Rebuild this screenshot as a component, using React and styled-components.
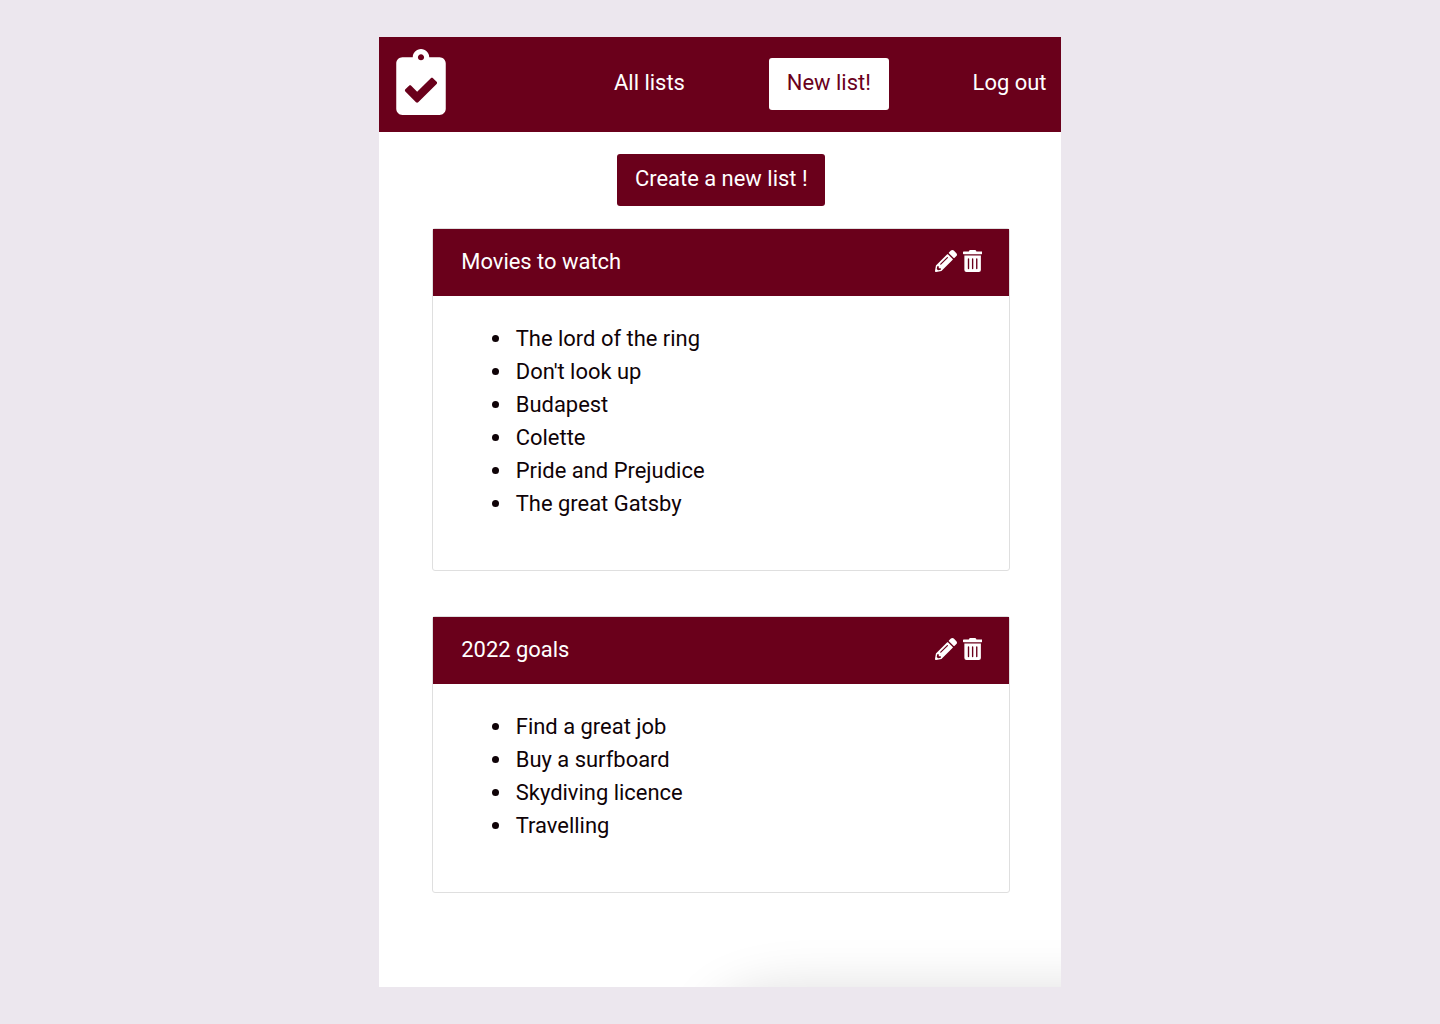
import React from "react";
import styled, { createGlobalStyle } from "styled-components";
import { FaClipboardCheck, FaPencilAlt, FaTrashAlt } from "react-icons/fa";

const wine = "#6a001b";

const GlobalStyle = createGlobalStyle`
  * { box-sizing: border-box; }
  body {
    margin: 0;
    background: #ece7ee;
    color: #0f0307;
    font: 21.95px/33px Roboto, "Liberation Sans", sans-serif;
  }
`;

const Backdrop = styled.div`
  display: flex;
  justify-content: center;
  height: 1024px;
  padding-top: 37px;
`;

const Page = styled.div`
  position: relative;
  width: 682px;
  height: 950px;
  overflow: hidden;
  background: #fff;

  &::after {
    content: "";
    position: absolute;
    top: 100%;
    left: 332px;
    width: 500px;
    height: 200px;
    border-radius: 90px 0 0 0 / 40px 0 0 0;
    box-shadow: 0 0 52px rgba(0, 0, 0, 0.13);
  }
`;

const NavBar = styled.nav`
  display: flex;
  align-items: center;
  justify-content: space-between;
  height: 94.5px;
  padding: 0 14.5px 0 9px;
  background: ${wine};
  color: #fff;
`;

const Logo = styled.a`
  display: flex;
  justify-content: center;
  width: 66px;
  margin-right: 76px;
  padding-bottom: 4px;
`;

const NavLink = styled.a`
  padding-bottom: 4px;
`;

const Button = styled.button`
  height: 52px;
  padding: 0 17.8px 2px;
  border: 0;
  border-radius: 3px;
  font: inherit;
  background: ${wine};
  color: #fff;
`;

const NavButton = styled(Button)`
  margin-bottom: 1px;
  background: #fff;
  color: ${wine};
`;

const Main = styled.main`
  display: flex;
  flex-direction: column;
  align-items: center;
  padding: 22px 51px 0 53.5px;
`;

const Card = styled.section`
  width: 578px;
  height: ${(p) => p.$height}px;
  margin-top: ${(p) => p.$gap}px;
  border: 1px solid #dfdfdf;
  border-radius: 3px;
`;

const CardHeader = styled.header`
  display: flex;
  align-items: center;
  justify-content: space-between;
  height: 67px;
  padding: 0 27.5px 2px 28px;
  background: ${wine};
  color: #fff;
`;

const Actions = styled.div`
  display: flex;
  gap: 5.5px;
  padding-bottom: 2px;
`;

const TrashIcon = styled(FaTrashAlt)`
  width: 19.25px;
  height: 22px;
`;

const Items = styled.ul`
  margin: 26px 0 0;
  padding-left: 59px;
  list-style: none;
`;

const Item = styled.li`
  display: flex;
  align-items: center;
  gap: 16.5px;

  &::before {
    content: "";
    width: 7px;
    height: 7px;
    border-radius: 50%;
    background: #0f0307;
  }
`;

const lists = [
  {
    title: "Movies to watch",
    height: 343,
    gap: 22.5,
    items: ["The lord of the ring", "Don't look up", "Budapest", "Colette", "Pride and Prejudice", "The great Gatsby"],
  },
  {
    title: "2022 goals",
    height: 277,
    gap: 45,
    items: ["Find a great job", "Buy a surfboard", "Skydiving licence", "Travelling"],
  },
];

export default function App() {
  return (
    <Backdrop>
      <GlobalStyle />
      <Page>
        <NavBar>
          <Logo><FaClipboardCheck size={66} /></Logo>
          <NavLink>All lists</NavLink>
          <NavButton>New list!</NavButton>
          <NavLink>Log out</NavLink>
        </NavBar>
        <Main>
          <Button>Create a new list !</Button>
          {lists.map((list) => (
            <Card key={list.title} $height={list.height} $gap={list.gap}>
              <CardHeader>
                <span>{list.title}</span>
                <Actions>
                  <FaPencilAlt size={22} />
                  <TrashIcon />
                </Actions>
              </CardHeader>
              <Items>
                {list.items.map((item) => <Item key={item}>{item}</Item>)}
              </Items>
            </Card>
          ))}
        </Main>
      </Page>
    </Backdrop>
  );
}
